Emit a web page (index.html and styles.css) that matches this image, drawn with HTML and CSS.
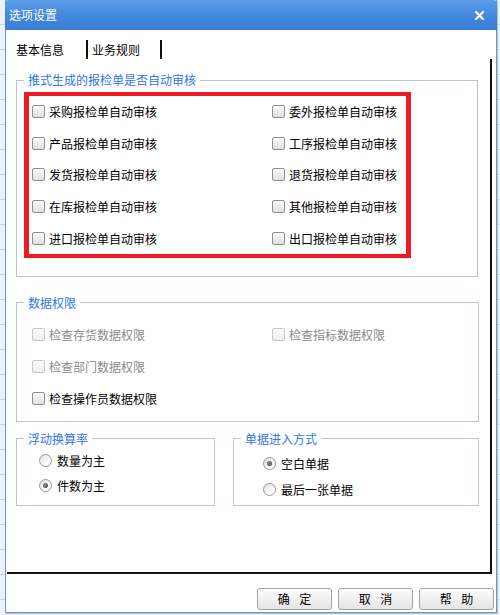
FILE: index.html
```html
<!DOCTYPE html>
<html lang="zh-CN">
<head>
    <meta charset="UTF-8">
    <title>选项设置</title>
    <link rel="stylesheet" href="styles.css">
</head>
<body>
    <div class="dialog">
        <div class="titlebar">
            <span class="title">选项设置</span>
            <svg class="close" width="9" height="9" viewBox="0 0 9 9">
                <path d="M1 1 L8 8 M8 1 L1 8" stroke="#fff" stroke-width="2.2" stroke-linecap="square"/>
            </svg>
        </div>

        <div class="tabs">
            <span class="tab">基本信息</span>
            <span class="tab-sep"></span>
            <span class="tab">业务规则</span>
            <span class="tab-sep"></span>
        </div>

        <div class="panel">
            <fieldset class="group group-audit">
                <legend>推式生成的报检单是否自动审核</legend>
                <div class="group-body">
                    <div class="highlight">
                        <label class="check"><span class="box"></span>采购报检单自动审核</label>
                        <label class="check"><span class="box"></span>产品报检单自动审核</label>
                        <label class="check"><span class="box"></span>发货报检单自动审核</label>
                        <label class="check"><span class="box"></span>在库报检单自动审核</label>
                        <label class="check"><span class="box"></span>进口报检单自动审核</label>
                        <label class="check"><span class="box"></span>委外报检单自动审核</label>
                        <label class="check"><span class="box"></span>工序报检单自动审核</label>
                        <label class="check"><span class="box"></span>退货报检单自动审核</label>
                        <label class="check"><span class="box"></span>其他报检单自动审核</label>
                        <label class="check"><span class="box"></span>出口报检单自动审核</label>
                    </div>
                </div>
            </fieldset>

            <fieldset class="group group-rights">
                <legend>数据权限</legend>
                <div class="group-body">
                    <label class="check disabled"><span class="box"></span>检查存货数据权限</label>
                    <label class="check disabled"><span class="box"></span>检查指标数据权限</label>
                    <label class="check disabled col-first"><span class="box"></span>检查部门数据权限</label>
                    <label class="check col-first"><span class="box"></span>检查操作员数据权限</label>
                </div>
            </fieldset>

            <div class="group-row">
                <fieldset class="group group-rate">
                    <legend>浮动换算率</legend>
                    <div class="group-body">
                        <label class="option"><span class="dot"></span>数量为主</label>
                        <label class="option"><span class="dot on"></span>件数为主</label>
                    </div>
                </fieldset>
                <fieldset class="group group-entry">
                    <legend>单据进入方式</legend>
                    <div class="group-body">
                        <label class="option"><span class="dot on"></span>空白单据</label>
                        <label class="option"><span class="dot"></span>最后一张单据</label>
                    </div>
                </fieldset>
            </div>
        </div>

        <div class="buttons">
            <button>确 定</button>
            <button>取 消</button>
            <button>帮 助</button>
        </div>
    </div>
</body>
</html>
```

FILE: styles.css
```css
body {
    margin: 0;
    width: 500px;
    height: 615px;
    overflow: hidden;
    font-family: "Noto Sans CJK SC", sans-serif;
    font-size: 12px;
    color: #000;
    background: #edf3fb repeating-linear-gradient(to bottom, transparent 0 24px, #c9d5e5 24px 25px);
}

.dialog {
    margin-left: 5px;
    width: 490px;
    height: 612px;
    border: 1px solid #5c9be8;
    border-top: 0;
    box-shadow: 1px 1px 0 #bdbdbd;
    background: #fff;
    display: flex;
    flex-direction: column;
}

.titlebar {
    height: 30px;
    margin: 0 -1px;
    padding: 0 13px 0 4px;
    display: flex;
    align-items: center;
    justify-content: space-between;
    background: linear-gradient(#5b9de8, #4288dd 55%, #3b7dd5);
    border-radius: 3px 3px 0 0;
    color: #fff;
    flex-shrink: 0;
}

.title {
    font-size: 12px;
    line-height: 16px;
}

.tabs {
    display: flex;
    align-items: center;
    padding: 10px 0 0 10px;
    height: 19px;
}

.tab {
    line-height: 19px;
}

.tab-sep {
    width: 2px;
    height: 19px;
    background: #111;
    margin: 0 4px 0 22px;
}

.tab-sep:last-child {
    margin-left: 20px;
}

/* tab page: dark edge only on the right and bottom */
.panel {
    margin-left: 1px;
    width: 474px;
    height: 500px;
    border-right: 2px solid #111;
    border-bottom: 2px solid #111;
    padding: 13px 0 0 9px;
    flex-shrink: 0;
}

.group {
    margin: 0;
    border: 1px solid #b4c5dc;
    padding: 0;
    min-width: 0;
    box-sizing: border-box;
    width: 462px;
}

.group legend {
    margin-left: 7px;
    padding: 0 4px;
    line-height: 16px;
    color: #2f76e6;
}

.group-audit .group-body {
    padding: 4px 0 18px 7px;
}

.highlight {
    width: 387px;
    box-sizing: border-box;
    border: 4px solid #ed1c24;
    border-left-width: 5px;
    border-right-width: 5px;
    padding-left: 3px;
    display: grid;
    grid-template-columns: 240px 1fr;
    grid-template-rows: repeat(5, 31.6px);
    grid-auto-flow: column;
}

.group-rights {
    margin-top: 18px;
    width: 463px;
}

.group-rights .group-body {
    padding: 8px 0 6px 15px;
    display: grid;
    grid-template-columns: 240px 1fr;
    grid-auto-rows: 32px;
}

.col-first {
    grid-column: 1;
}

.check {
    display: flex;
    align-items: center;
    gap: 4px;
    white-space: nowrap;
}

.box {
    width: 13px;
    height: 13px;
    box-sizing: border-box;
    border: 1px solid #8f8f8f;
    border-radius: 2px;
    background: linear-gradient(#fbfbfb, #dedede);
}

.check.disabled {
    color: #8a8a8a;
}

.check.disabled .box {
    border-color: #c9c9c9;
    background: linear-gradient(#fcfcfc, #efefef);
}

.group-row {
    display: flex;
    gap: 18px;
    margin-top: 9px;
}

.group-rate {
    width: 199px;
}

.group-rate .group-body {
    padding: 1.5px 0 6.5px 22px;
}

.group-rate .option {
    height: 25px;
}

.group-entry {
    width: 246px;
}

.group-entry .group-body {
    padding: 4px 0 2px 29px;
}

.group-entry .option {
    height: 26px;
}

.option {
    display: flex;
    align-items: center;
    gap: 5px;
    white-space: nowrap;
}

.dot {
    width: 13px;
    height: 13px;
    box-sizing: border-box;
    border: 1px solid #979797;
    border-radius: 50%;
    background: linear-gradient(135deg, #dcdcdc, #fff 70%);
    display: flex;
    align-items: center;
    justify-content: center;
}

.dot.on::after {
    content: "";
    width: 5px;
    height: 5px;
    border-radius: 50%;
    background: radial-gradient(circle at 40% 40%, #8a8a8a, #3f3f3f);
}

.buttons {
    display: flex;
    justify-content: flex-end;
    gap: 6px;
    padding-right: 2px;
    margin-top: 14px;
}

button {
    width: 75px;
    height: 22px;
    border: 1px solid #a3a3a3;
    border-radius: 3px;
    background: linear-gradient(#fdfdfd, #e4e4e4);
    font-family: "Noto Sans CJK SC", sans-serif;
    font-size: 12px;
    color: #000;
    letter-spacing: 3.5px;
    padding: 0 0 0 3.5px;
    line-height: 18px;
}
```
